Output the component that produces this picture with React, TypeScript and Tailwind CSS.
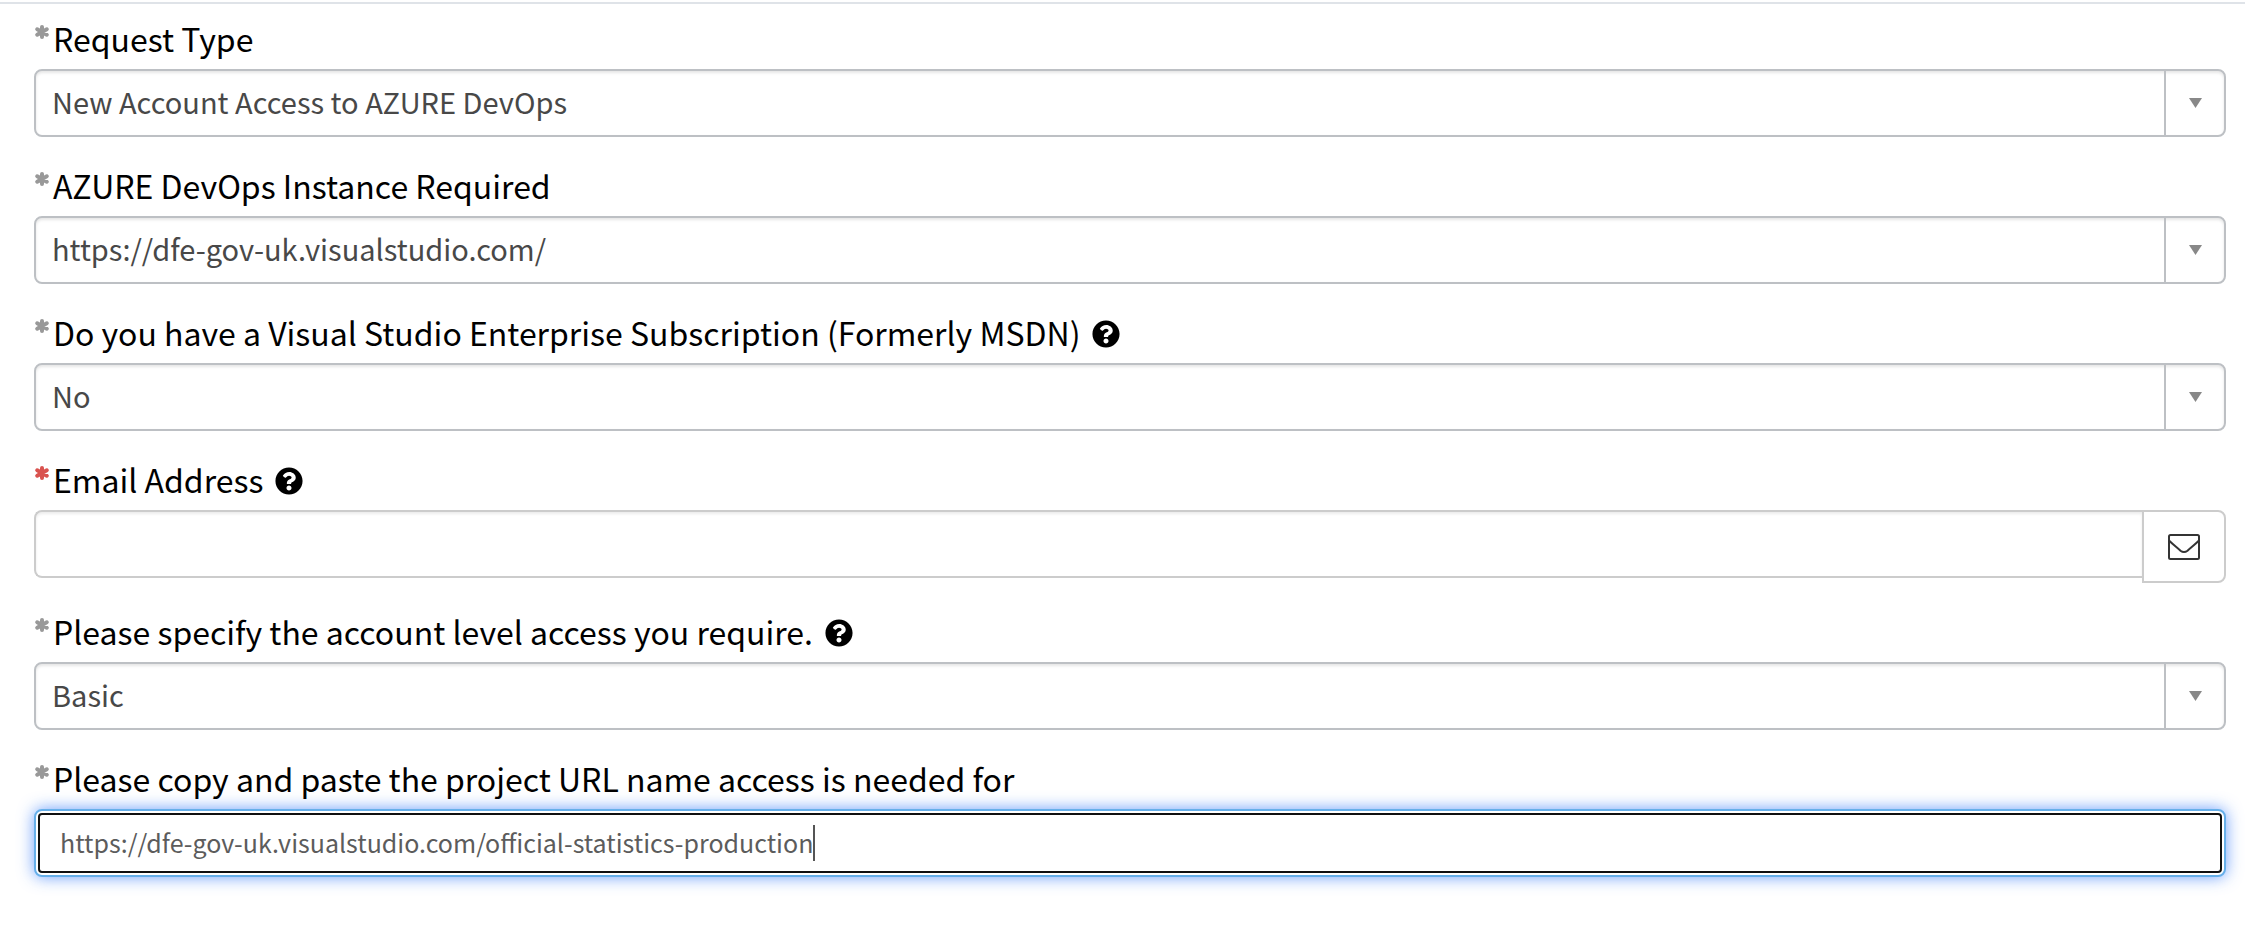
import React, { useId, useState } from "react";
import { FaQuestionCircle } from "react-icons/fa";

type LabelProps = { htmlFor: string; text: string; help?: boolean; missing?: boolean };

function FieldLabel({ htmlFor, text, help, missing }: LabelProps) {
  return (
    <div className="flex h-12 items-start">
      <svg
        viewBox="0 0 16 16"
        aria-hidden="true"
        className={missing ? "mt-[3px] mr-[3px] size-4 text-[#d9534f]" : "mt-[3px] mr-[3px] size-4 text-[#999999]"}
        stroke="currentColor"
        strokeWidth="4"
        strokeLinecap="round"
      >
        <path d="M8 3V13M3.200 5.300L12.800 10.700M12.800 5.300L3.200 10.700" />
      </svg>
      <label htmlFor={htmlFor} className="text-[32px] leading-[34px] text-black">
        {text}
      </label>
      {help && (
        <button type="button" aria-label={"Help: " + text} className="mt-[5px] ml-3 text-black">
          <FaQuestionCircle className="size-7" />
        </button>
      )}
    </div>
  );
}

type SelectProps = { label: string; options: string[]; help?: boolean };

function SelectField({ label, options, help }: SelectProps) {
  const id = useId();
  return (
    <div>
      <FieldLabel htmlFor={id} text={label} help={help} />
      <div className="grid h-[68px] grid-cols-[1fr_60px] rounded-lg border-2 border-[#bdc0c4] bg-white shadow-[inset_0_2px_3px_rgba(0,0,0,0.1)]">
        <select
          id={id}
          className="col-span-2 col-start-1 row-start-1 w-full appearance-none bg-transparent pr-16 pb-0.5 pl-4 text-[29px] text-[#484848] outline-none"
        >
          {options.map((option) => (
            <option key={option}>{option}</option>
          ))}
        </select>
        <span className="pointer-events-none col-start-2 row-start-1 flex items-center justify-center border-l-2 border-[#bdc0c4]">
          <svg viewBox="0 0 13 10" className="h-[10px] w-[13px]" aria-hidden="true">
            <path d="M0 0H13L6.5 10Z" fill="#888888" />
          </svg>
        </span>
      </div>
    </div>
  );
}

function EmailField() {
  const id = useId();
  return (
    <div>
      <FieldLabel htmlFor={id} text="Email Address" help missing />
      <div className="flex items-start">
        <input
          id={id}
          type="email"
          className="h-[68px] min-w-0 flex-1 rounded-l-lg border-2 border-r-0 border-[#cccccc] px-4 text-[29px] text-[#555555] shadow-[inset_0_2px_3px_rgba(0,0,0,0.08)] outline-none"
        />
        <button
          type="button"
          aria-label="Send email"
          className="flex h-[73px] w-[84px] items-center justify-center rounded-r-lg border-2 border-[#cccccc] bg-white"
        >
          <svg viewBox="0 0 32 26" className="h-[26px] w-8" fill="none" stroke="#343434" strokeWidth="2" aria-hidden="true">
            <rect x="1" y="1" width="30" height="24" rx="1.5" />
            <path d="M1 6.5C5 10.5 9 13.500 12.500 16.700C15 18.600 17 18.600 19.500 16.700C23 13.500 27 10.500 31 6.500" />
          </svg>
        </button>
      </div>
    </div>
  );
}

function UrlField() {
  const id = useId();
  const [value, setValue] = useState("https://dfe-gov-uk.visualstudio.com/official-statistics-production");
  return (
    <div>
      <FieldLabel htmlFor={id} text="Please copy and paste the project URL name access is needed for" />
      <div className="h-[68px] rounded-lg border-2 border-[#66afe9] bg-white p-0.5 shadow-[0_0_16px_rgba(80,140,250,0.85)]">
        <div className="flex h-full items-center rounded-sm border-2 border-[#101010] pl-5">
          <input
            id={id}
            type="text"
            value={value}
            onChange={(event) => setValue(event.target.value)}
            className="field-sizing-content max-w-full text-[25px] text-[#5c5c5c] caret-transparent outline-none"
          />
          <span className="h-9 w-0.5 bg-[#555555]" />
        </div>
      </div>
    </div>
  );
}

export default function App() {
  return (
    <main className="bg-white pt-0.5 font-['Noto_Sans_CJK_SC',sans-serif]">
      <form className="flex flex-col gap-[31px] border-t-2 border-[#dfe3e8] pt-[17px] pr-[19px] pb-12 pl-[34px]">
        <SelectField label="Request Type" options={["New Account Access to AZURE DevOps"]} />
        <SelectField label="AZURE DevOps Instance Required" options={["https://dfe-gov-uk.visualstudio.com/"]} />
        <SelectField
          label="Do you have a Visual Studio Enterprise Subscription (Formerly MSDN)"
          options={["No", "Yes"]}
          help
        />
        <EmailField />
        <SelectField label="Please specify the account level access you require." options={["Basic"]} help />
        <UrlField />
      </form>
    </main>
  );
}
